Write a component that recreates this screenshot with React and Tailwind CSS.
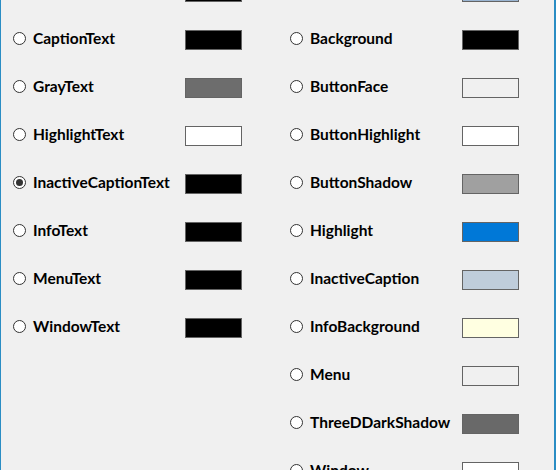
import React from "react";

const left = [
  ["ActiveCaptionText", "#000000"],
  ["CaptionText", "#000000"],
  ["GrayText", "#6d6d6d"],
  ["HighlightText", "#ffffff"],
  ["InactiveCaptionText", "#000000", true],
  ["InfoText", "#000000"],
  ["MenuText", "#000000"],
  ["WindowText", "#000000"],
];

const right = [
  ["ActiveCaption", "#99b4d1"],
  ["Background", "#000000"],
  ["ButtonFace", "#f0f0f0"],
  ["ButtonHighlight", "#ffffff"],
  ["ButtonShadow", "#a0a0a0"],
  ["Highlight", "#0078d7"],
  ["InactiveCaption", "#bfcddb"],
  ["InfoBackground", "#ffffe1"],
  ["Menu", "#f0f0f0"],
  ["ThreeDDarkShadow", "#696969"],
  ["Window", "#ffffff"],
];

function Row({ name, color, checked }) {
  return (
    <div className="flex h-[48px] items-center">
      <span className="mb-[3px] flex h-[13px] w-[13px] shrink-0 items-center justify-center rounded-full border border-[#333333] bg-white">
        {checked && <span className="h-[7px] w-[7px] rounded-full bg-[#333333]" />}
      </span>
      <span className="mb-[2px] ml-[7px] w-[152px] whitespace-nowrap text-[15.5px] font-bold leading-none text-black">
        {name}
      </span>
      <span
        className="h-[20px] w-[57px] shrink-0 border border-[#646464]"
        style={{ backgroundColor: color }}
      />
    </div>
  );
}

export default function App() {
  return (
    <div
      className="h-[470px] w-[556px] overflow-hidden border-l border-r-2 border-l-[#2a8dc4] border-r-[#2a8dc4] bg-[#f0f0f0]"
      style={{ fontFamily: 'Lato, "Open Sans", sans-serif' }}
    >
      <div className="mt-[-32px] flex">
        <div className="ml-[12px] flex w-[277px] flex-col">
          {left.map(([n, c, ch]) => (
            <Row key={n} name={n} color={c} checked={ch} />
          ))}
        </div>
        <div className="flex flex-col">
          {right.map(([n, c, ch]) => (
            <Row key={n} name={n} color={c} checked={ch} />
          ))}
        </div>
      </div>
    </div>
  );
}
